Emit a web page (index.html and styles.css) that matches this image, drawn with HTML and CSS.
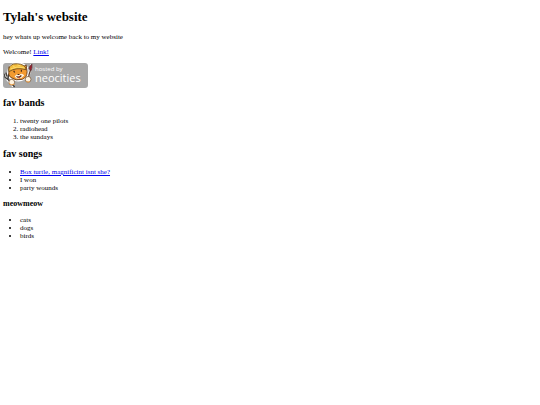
FILE: index.html
```html
<!DOCTYPE html>
<html lang="en">
<head>
<meta charset="utf-8">
<meta name="viewport" content="width=device-width, initial-scale=1">
<title>Tylah's website</title>
<link rel="stylesheet" href="styles.css">
</head>
<body>
<h1>Tylah's website</h1>
<p>hey whats up welcome back to my website</p>
<p>Welcome! <a href="#">Link!</a></p>
<a class="badge" href="#" aria-label="hosted by neocities">
  <svg class="cat" viewBox="0 0 31 26" aria-hidden="true">
    <g stroke="#fff" stroke-width="2" stroke-linejoin="round" stroke-linecap="round" fill="#fff">
      <path d="M6 6Q8 1 14 1Q22 0 25 5L26 12Q22 19 14 18Q6 17 5 11Z"/>
      <path d="M29 2L29 6L27 12L26 18M1 12L4 17L10 24" fill="none"/>
    </g>
    <path d="M1 11L2 15L5 17L12 25M3 10L4 14M6 11L5 17" fill="none" stroke="#45423f" stroke-width="1.4"/>
    <path d="M6 9L6 4L9 5Q14 2 19 5L24 2L25 9Q25 15 20 17Q13 19 8 15Q5 13 6 9Z" fill="#f39a30" stroke="#5f3719" stroke-width=".9"/>
    <path d="M6 9Q5 3 11 1Q19 0 23 4L24 7Q14 4 6 9Z" fill="#f3bd3c" stroke="#6d4b20" stroke-width=".9"/>
    <path d="M8 6Q14 3 22 5M10 3L12 4M15 2L18 3" fill="none" stroke="#ffe27c" stroke-width=".8"/>
    <path d="M12 14Q14 11 17 12Q20 10 22 13Q19 17 14 16Z" fill="#fff0dd"/>
    <path d="M11 8L12 10M19 7L19 9M15 12L17 12M14 14Q16 16 19 13" stroke="#442817" stroke-width="1.2" fill="none"/>
    <path d="M15 14L18 14L17 16Z" fill="#bb4937"/>
    <path d="M29 6L27 12L26 19" stroke="#5e4133" stroke-width="1.4" fill="none"/>
    <path d="M27 6Q27 3 30 1L30 5L29 8Z" fill="#9b1f2d" stroke="#542e32" stroke-width=".7"/>
    <g fill="#fff3df" stroke="#684629" stroke-width=".7">
      <circle cx="9" cy="20" r="3"/>
      <circle cx="26" cy="17" r="3"/>
    </g>
    <path d="M6 21Q8 24 12 22M24 19Q26 21 28 19" fill="none" stroke="#eb9d43" stroke-width="1"/>
  </svg>
  <span class="words">
    <span class="hosted">hosted by</span>
    <span class="brand">neocities</span>
  </span>
</a>
<h2>fav bands</h2>
<ol>
  <li>twenty one pilots</li>
  <li>radiohead</li>
  <li>the sundays</li>
</ol>
<h2>fav songs</h2>
<ul>
  <li><a href="#">Box turtle, magnificint isnt she?</a></li>
  <li>I won</li>
  <li>party wounds</li>
</ul>
<h3>meowmeow</h3>
<ul>
  <li>cats</li>
  <li>dogs</li>
  <li>birds</li>
</ul>
</body>
</html>
```
FILE: styles.css
```css
body {
  margin: 0;
  padding: 9px 3px;
  background: #fff;
  color: #000;
  font: 7px/8px "Liberation Serif", "Times New Roman", serif;
}

h1 {
  margin: 0 0 9px;
  font-size: 13px;
  line-height: 15px;
}

h2 {
  margin: 7px 0 8px;
  font-size: 10px;
  line-height: 12px;
}

h3 {
  margin: 7px 0 8px;
  font-size: 8px;
  line-height: 9px;
}

p {
  margin: 0 0 7px;
}

a {
  color: #0000ee;
}

ol,
ul {
  margin: 0;
  padding-left: 17px;
}

.badge {
  display: flex;
  width: 85px;
  height: 25px;
  margin-bottom: 9px;
  border-radius: 3px;
  background: #a9a9a9;
  color: #fff;
  font-family: "Open Sans", "Noto Sans", sans-serif;
  text-decoration: none;
}

.cat {
  flex: none;
  width: 30px;
  height: 25px;
}

.words {
  display: flex;
  flex-direction: column;
  padding: 3px 0 0 2px;
}

.hosted {
  font-size: 6px;
  line-height: 7px;
}

.brand {
  font-size: 11px;
  line-height: 10px;
}
```
